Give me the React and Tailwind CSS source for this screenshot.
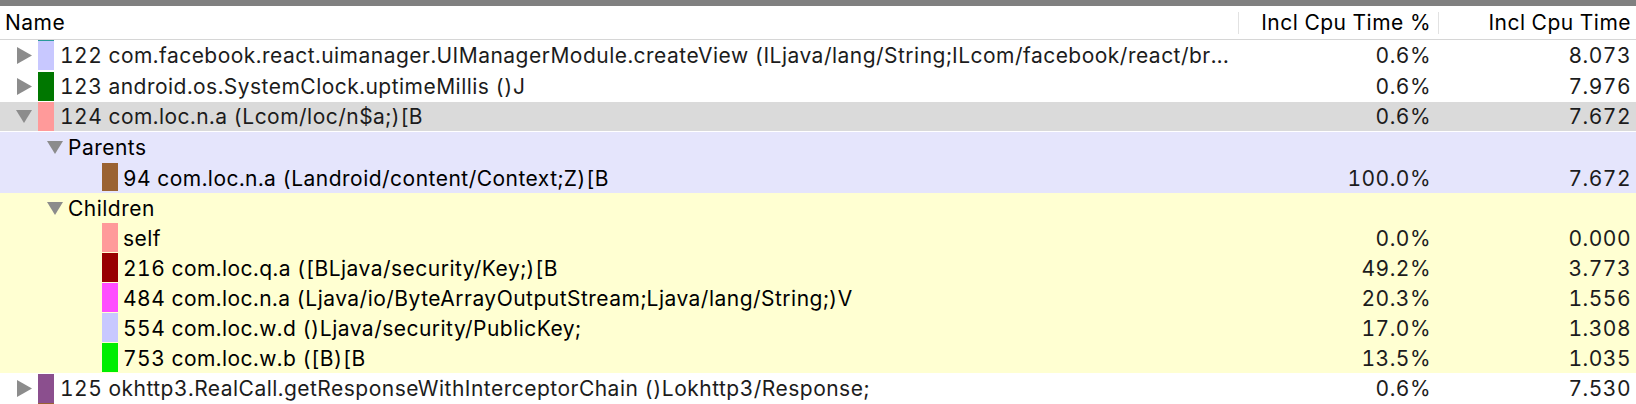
import React from "react";

const RightTri = () => (
  <svg width="15" height="17" viewBox="0 0 15 17" className="shrink-0">
    <polygon points="0,0 15,8.5 0,17" fill="#8c8c8c" />
  </svg>
);
const DownTri = () => (
  <svg width="16" height="13" viewBox="0 0 16 13" className="shrink-0">
    <polygon points="0,0 16,0 8,13" fill="#8c8c8c" />
  </svg>
);

function Row({ h, bg, children, pct, time, extra = "" }) {
  return (
    <div className={`flex items-center ${bg} ${extra}`} style={{ height: h }}>
      <div className="w-[1238px] self-stretch flex items-center overflow-hidden whitespace-nowrap">
        {children}
      </div>
      <div className="w-[200px] text-right pr-[7px]">{pct}</div>
      <div className="w-[198px] text-right pr-[5px]">{time}</div>
    </div>
  );
}

export default function App() {
  return (
    <div className="w-[1636px] h-[404px] overflow-hidden bg-white text-[#1c1c1c] font-['Inter',sans-serif] text-[21px] tracking-[0.48px] tabular-nums leading-none">
      <div className="h-[6px] bg-[#808080]" />
      <div className="h-[34px] flex items-center border-b border-[#d6d6d6] text-black">
        <div className="w-[1238px] pl-[5px] self-stretch flex items-center">Name</div>
        <div className="w-[200px] self-stretch flex items-center justify-end pr-[7px] relative">
          <div className="absolute left-0 top-[6px] bottom-[5px] w-px bg-[#e2e2e2]" />
          Incl Cpu Time %
        </div>
        <div className="w-[198px] self-stretch flex items-center justify-end pr-[5px] relative">
          <div className="absolute left-0 top-[6px] bottom-[5px] w-px bg-[#e2e2e2]" />
          Incl Cpu Time
        </div>
      </div>

      <Row h={31} bg="bg-white" pct="0.6%" time="8.073">
        <div className="pl-[17px] flex items-center self-stretch">
          <RightTri />
          <div className="ml-[6px] w-[16px] self-stretch flex flex-col">
            <div className="h-[1px] bg-[#2a9a9a]" />
            <div className="flex-1 bg-[#c8c8ff] mb-[1px]" />
          </div>
          <span className="ml-[6px]">122 com.facebook.react.uimanager.UIManagerModule.createView (ILjava/lang/String;ILcom/facebook/react/br...</span>
        </div>
      </Row>
      <Row h={31} bg="bg-white" pct="0.6%" time="7.976">
        <div className="pl-[17px] flex items-center self-stretch">
          <RightTri />
          <div className="ml-[6px] w-[16px] self-stretch my-[1px] bg-[#007700]" />
          <span className="ml-[6px]">123 android.os.SystemClock.uptimeMillis ()J</span>
        </div>
      </Row>
      <Row h={30} bg="bg-[#dadada]" pct="0.6%" time="7.672" extra="border-b border-white">
        <div className="pl-[16px] flex items-center self-stretch">
          <DownTri />
          <div className="ml-[6px] w-[16px] self-stretch bg-[#ff9a9a]" />
          <span className="ml-[6px]">124 com.loc.n.a (Lcom/loc/n$a;)[B</span>
        </div>
      </Row>
      <Row h={31} bg="bg-[#e5e5fc]" pct="" time="">
        <div className="pl-[47px] flex items-center self-stretch">
          <DownTri />
          <span className="ml-[5px] text-black">Parents</span>
        </div>
      </Row>
      <Row h={30} bg="bg-[#e5e5fc]" pct="100.0%" time="7.672">
        <div className="pl-[102px] flex items-center self-stretch">
          <div className="w-[16px] self-stretch mb-[2px] bg-[#9a6232]" />
          <span className="ml-[5px] text-black">94 com.loc.n.a (Landroid/content/Context;Z)[B</span>
        </div>
      </Row>
      <div className="bg-[#ffffd2]">
        <Row h={30} bg="" pct="" time="">
          <div className="pl-[47px] flex items-center self-stretch">
            <DownTri />
            <span className="ml-[5px] text-black">Children</span>
          </div>
        </Row>
        {[
          ["#ff9a9a", "self", "0.0%", "0.000"],
          ["#990000", "216 com.loc.q.a ([BLjava/security/Key;)[B", "49.2%", "3.773"],
          ["#ff4dff", "484 com.loc.n.a (Ljava/io/ByteArrayOutputStream;Ljava/lang/String;)V", "20.3%", "1.556"],
          ["#c8c8ff", "554 com.loc.w.d ()Ljava/security/PublicKey;", "17.0%", "1.308"],
          ["#00ee00", "753 com.loc.w.b ([B)[B", "13.5%", "1.035"],
        ].map(([c, t, p, v]) => (
          <Row key={t} h={30} bg="" pct={p} time={v}>
            <div className="pl-[102px] flex items-center self-stretch">
              <div className="w-[16px] self-stretch mb-[1px]" style={{ background: c }} />
              <span className="ml-[5px] text-black">{t}</span>
            </div>
          </Row>
        ))}
      </div>
      <Row h={31} bg="bg-white" pct="0.6%" time="7.530">
        <div className="pl-[17px] flex items-center self-stretch">
          <RightTri />
          <div className="ml-[6px] w-[16px] self-stretch flex flex-col">
            <div className="flex-1 bg-[#8b4f8e] mt-[1px]" />
            <div className="h-[1px] bg-[#9a6232]" />
          </div>
          <span className="ml-[6px]">125 okhttp3.RealCall.getResponseWithInterceptorChain ()Lokhttp3/Response;</span>
        </div>
      </Row>
    </div>
  );
}
